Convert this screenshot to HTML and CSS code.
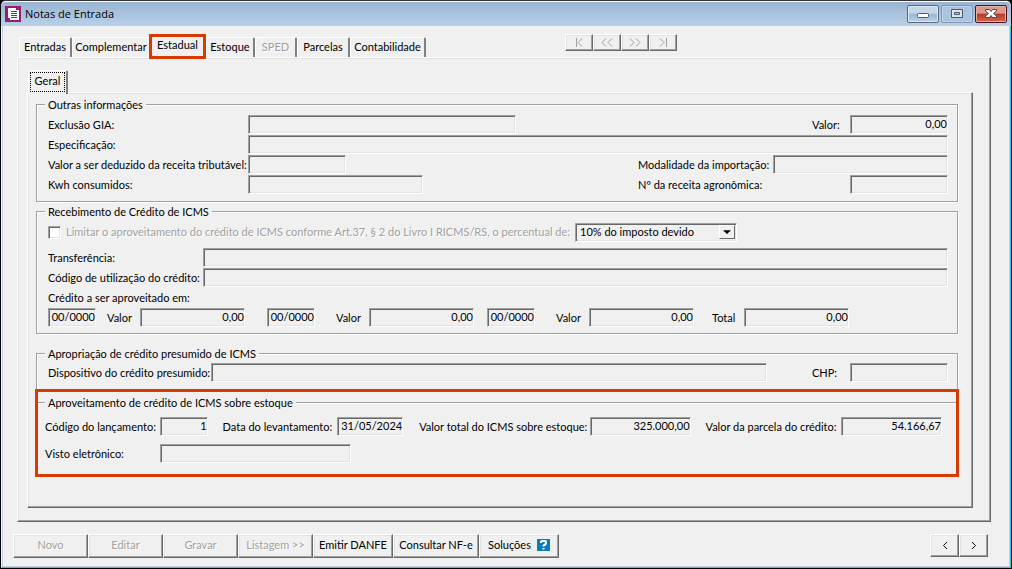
FILE: index.html
```html
<!DOCTYPE html>
<html lang="pt-BR">
<head>
    <meta charset="UTF-8">
    <meta name="viewport" content="width=device-width, initial-scale=1.0">
    <title>Notas de Entrada</title>
    <link rel="stylesheet" href="styles.css">
</head>
<body>
    <div class="window">
        <header class="titlebar">
            <svg class="app-icon" width="16" height="16" viewBox="0 0 16 16">
                <rect width="16" height="16" fill="#9b1c6e"/>
                <path d="M3 2h8v2h3v10H5v-2H3z" fill="#fff"/>
                <path d="M6 5.500h6M6 7.500h6M6 9.500h6M6 11.500h6" stroke="#9b1c6e"/>
            </svg>
            <h1 class="title">Notas de Entrada</h1>
            <div class="window-buttons">
                <button class="win-btn" aria-label="Minimizar">
                    <svg width="12" height="12" viewBox="0 0 12 12"><rect x=".5" y="5.500" width="11" height="4" rx="1" fill="#fff" stroke="#50566b"/></svg>
                </button>
                <button class="win-btn win-max" aria-label="Maximizar">
                    <svg width="12" height="12" viewBox="0 0 12 12"><path d="M.5 1.500h11v8H.5zM3.500 4.500v2h5v-2z" fill="#dde3ea" fill-rule="evenodd" stroke="#50566b"/></svg>
                </button>
                <button class="win-btn win-close" aria-label="Fechar">
                    <svg width="12" height="12" viewBox="0 0 12 12"><path d="M.5 1.500h4L6 3.500l1.500-2h4V3L8.500 5.500l3 2.500v1.500h-4L6 7.500l-1.500 2h-4V8l3-2.500L.5 3z" fill="#fff" stroke="#50435a"/></svg>
                </button>
            </div>
        </header>

        <main class="content">
            <div class="top-row">
                <div class="tabs" role="tablist">
                    <button class="tab tab-entradas" role="tab">Entradas</button>
                    <button class="tab tab-complementar" role="tab">Complementar</button>
                    <button class="tab active" role="tab" aria-selected="true">Estadual</button>
                    <button class="tab tab-estoque" role="tab">Estoque</button>
                    <button class="tab tab-sped" role="tab" disabled>SPED</button>
                    <button class="tab tab-parcelas" role="tab">Parcelas</button>
                    <button class="tab tab-contabilidade" role="tab">Contabilidade</button>
                </div>
                <div class="record-nav">
                    <button class="btn nav-btn" disabled aria-label="Primeiro">
                        <svg class="arrow" width="20" height="9" viewBox="0 0 20 9"><path d="M7.5 0v9M13 .5l-4 4 4 4"/></svg>
                    </button>
                    <button class="btn nav-btn" disabled aria-label="Anterior">
                        <svg class="arrow" width="20" height="9" viewBox="0 0 20 9"><path d="M9 .5l-4 4 4 4M15 .5l-4 4 4 4"/></svg>
                    </button>
                    <button class="btn nav-btn" disabled aria-label="Próximo">
                        <svg class="arrow" width="20" height="9" viewBox="0 0 20 9"><path d="M5 .5l4 4-4 4M11 .5l4 4-4 4"/></svg>
                    </button>
                    <button class="btn nav-btn" disabled aria-label="Último">
                        <svg class="arrow" width="20" height="9" viewBox="0 0 20 9"><path d="M7 .5l4 4-4 4M13.500 0v9"/></svg>
                    </button>
                </div>
            </div>

            <div class="panel outer-panel">
                <div class="sub-tabs" role="tablist">
                    <button class="sub-tab" role="tab" aria-selected="true"><span class="focus">Geral</span></button>
                </div>
                <div class="panel inner-panel">

                    <fieldset class="group">
                        <legend>Outras informações</legend>
                        <div class="row">
                            <label class="label-col" for="gia">Exclusão GIA:</label>
                            <input class="field w-gia" id="gia" readonly>
                            <label class="push label-valor" for="valor">Valor:</label>
                            <input class="field w-small" id="valor" value="0,00" readonly>
                        </div>
                        <div class="row">
                            <label class="label-col" for="espec">Especificação:</label>
                            <input class="field grow" id="espec" readonly>
                        </div>
                        <div class="row">
                            <label class="label-col" for="deduzido">Valor a ser deduzido da receita tributável:</label>
                            <input class="field w-small" id="deduzido" readonly>
                            <label class="push label-modalidade" for="modalidade">Modalidade da importação:</label>
                            <input class="field w-medium" id="modalidade" readonly>
                        </div>
                        <div class="row">
                            <label class="label-col" for="kwh">Kwh consumidos:</label>
                            <input class="field w-medium" id="kwh" readonly>
                            <label class="push label-receita" for="receita">Nº da receita agronômica:</label>
                            <input class="field w-small" id="receita" readonly>
                        </div>
                    </fieldset>

                    <fieldset class="group group-credito">
                        <legend>Recebimento de Crédito de ICMS</legend>
                        <div class="row row-limite">
                            <input type="checkbox" class="check" id="limitar" disabled>
                            <label class="disabled-text" for="limitar">Limitar o aproveitamento do crédito de ICMS conforme Art.37, § 2 do Livro I RICMS/RS, o percentual de:</label>
                            <span class="combo">
                                <select aria-label="Percentual">
                                    <option>10% do imposto devido</option>
                                </select>
                                <svg class="combo-arrow" width="16" height="14" viewBox="0 0 16 14"><path d="M4 5h8v1h-1v1h-1v1H9v1H7V8H6V7H5V6H4z"/></svg>
                            </span>
                        </div>
                        <div class="row">
                            <label class="label-transf" for="transf">Transferência:</label>
                            <input class="field grow" id="transf" readonly>
                        </div>
                        <div class="row">
                            <label class="label-transf" for="codutil">Código de utilização do crédito:</label>
                            <input class="field grow" id="codutil" readonly>
                        </div>
                        <div class="row">
                            <span>Crédito a ser aproveitado em:</span>
                        </div>
                        <div class="credits">
                            <div class="credit">
                                <input class="field w-month" value="00/0000" aria-label="Mês 1" readonly>
                                <label for="v1">Valor</label>
                                <input class="field w-money" id="v1" value="0,00" readonly>
                            </div>
                            <div class="credit credit-wide">
                                <input class="field w-month" value="00/0000" aria-label="Mês 2" readonly>
                                <label for="v2">Valor</label>
                                <input class="field w-money" id="v2" value="0,00" readonly>
                            </div>
                            <div class="credit credit-wide">
                                <input class="field w-month" value="00/0000" aria-label="Mês 3" readonly>
                                <label for="v3">Valor</label>
                                <input class="field w-money" id="v3" value="0,00" readonly>
                            </div>
                            <div class="credit credit-total">
                                <label for="total">Total</label>
                                <input class="field w-money" id="total" value="0,00" readonly>
                            </div>
                        </div>
                    </fieldset>

                    <fieldset class="group group-presumido">
                        <legend>Apropriação de crédito presumido de ICMS</legend>
                        <div class="row">
                            <label class="label-disp" for="disp">Dispositivo do crédito presumido:</label>
                            <input class="field grow" id="disp" readonly>
                            <label class="label-chp" for="chp">CHP:</label>
                            <input class="field w-small" id="chp" readonly>
                        </div>
                    </fieldset>

                    <div class="highlight">
                        <fieldset class="group group-estoque">
                            <legend>Aproveitamento de crédito de ICMS sobre estoque</legend>
                            <div class="row stock-row">
                                <label class="label-stock" for="codlanc">Código do lançamento:</label>
                                <input class="field w-month" id="codlanc" value="1" readonly>
                                <label class="label-data" for="data">Data do levantamento:</label>
                                <input class="field w-date" id="data" value="31/05/2024" readonly>
                                <label class="label-total" for="icms">Valor total do ICMS sobre estoque:</label>
                                <input class="field w-stock" id="icms" value="325.000,00" readonly>
                                <label class="label-parcela" for="parcela">Valor da parcela do crédito:</label>
                                <input class="field w-stock" id="parcela" value="54.166,67" readonly>
                            </div>
                            <div class="row">
                                <label class="label-stock" for="visto">Visto eletrônico:</label>
                                <input class="field w-visto" id="visto" readonly>
                            </div>
                        </fieldset>
                    </div>
                </div>
            </div>

            <footer class="actions">
                <button class="btn action" disabled>Novo</button>
                <button class="btn action" disabled>Editar</button>
                <button class="btn action" disabled>Gravar</button>
                <button class="btn action" disabled>Listagem &gt;&gt;</button>
                <button class="btn action action-wide">Emitir DANFE</button>
                <button class="btn action action-wider">Consultar NF-e</button>
                <button class="btn action action-wide">Soluções
                    <svg class="help" width="13" height="12" viewBox="0 0 13 12"><rect width="13" height="12" fill="#0a7cba"/><path d="M4 4V3q0-1 1-1h3q1 0 1 1v1q0 1-1 1.500T6.500 7v.5M6.500 9v1.500" fill="none" stroke="#fff" stroke-width="2"/></svg>
                </button>
                <div class="pager">
                    <button class="btn page-btn" aria-label="Página anterior">
                        <svg class="arrow" width="6" height="9" viewBox="0 0 6 9"><path d="M5 1L1.500 4.500 5 8"/></svg>
                    </button>
                    <button class="btn page-btn" aria-label="Próxima página">
                        <svg class="arrow" width="6" height="9" viewBox="0 0 6 9"><path d="M1 1l3.500 3.500L1 8"/></svg>
                    </button>
                </div>
            </footer>
        </main>
    </div>
</body>
</html>
```

FILE: styles.css
```css
* {
    box-sizing: border-box;
}
body {
    margin: 0;
    background: #000;
    font-family: Lato, "Liberation Sans", Arial, sans-serif;
    font-size: 11px;
    line-height: 14px;
    color: #000;
}
button, input, select {
    margin: 0;
    font: inherit;
    color: inherit;
}
button {
    padding: 0;
    white-space: nowrap;
}
label, legend, span {
    white-space: nowrap;
}
svg {
    flex: none;
}

/* window frame */
.window {
    display: flex;
    flex-direction: column;
    min-height: 100vh;
    border: 1px solid #000;
    border-top-color: #333;
    border-radius: 6px 6px 0 0;
    background: #f0f0f0;
    box-shadow: inset -1px -1px 0 #35c5ea, inset 1px 0 0 #fff, inset 2px -2px 0 #b9d1ea, inset -2px 0 0 #b9d1ea;
}
.titlebar {
    display: flex;
    align-items: center;
    height: 25px;
    padding: 0 4px;
    border-top: 1px solid #fff;
    border-radius: 5px 5px 0 0;
    background: linear-gradient(#99b4d1, #b9d1ea);
}
.title {
    margin: 0 auto 0 4px;
    font: 11px/16px "Open Sans", "Noto Sans", sans-serif;
}
.window-buttons {
    display: flex;
    gap: 2px;
}
.win-btn {
    display: flex;
    align-items: center;
    justify-content: center;
    width: 32px;
    height: 18px;
    border: 1px solid #59677e;
    border-radius: 2px;
    background: linear-gradient(#c5d6e8 45%, #9db6d2 50%, #b9d1e8);
    box-shadow: inset 0 0 0 1px #dce8f4;
}
.win-max {
    border-color: #8397b1;
    background: #aac4df;
    box-shadow: inset 0 0 0 1px #bdd2e8;
}
.win-close {
    border-color: #4c1220;
    background: linear-gradient(#dd9a8c 45%, #b93922 50%, #cf6a4c);
    box-shadow: inset 0 0 0 1px #e6aea2;
}

/* tabs */
.content {
    flex: 1;
    display: flex;
    flex-direction: column;
    padding: 8px 20px 10px 16px;
}
.top-row {
    display: flex;
    align-items: flex-start;
    height: 23px;
}
.tabs {
    display: flex;
    align-items: flex-start;
    padding-left: 2px;
}
.tab {
    height: 20px;
    margin-top: 3px;
    padding-bottom: 2px;
    border: 0;
    border-top: 1px solid #fff;
    border-left: 1px solid #fff;
    border-right: 2px solid #808080;
    border-radius: 2px 2px 0 0;
    background: #f0f0f0;
}
.tab-entradas {
    width: 53px;
}
.tab-complementar {
    width: 77px;
    border-right: 0;
}
.tab-estoque {
    width: 49px;
}
.tab-sped {
    width: 42px;
}
.tab-parcelas {
    width: 53px;
}
.tab-contabilidade {
    width: 76px;
}
.tab.active {
    position: relative;
    width: 57px;
    height: 25px;
    margin-top: 0;
    padding-bottom: 3px;
    border: 3px solid #d83b01;
    border-radius: 0;
}
.tab:disabled, .btn:disabled, .disabled-text {
    color: #a0a0a0;
    text-shadow: 1px 1px 0 #fff;
}
.record-nav {
    display: flex;
    margin-left: 139px;
}
.btn {
    display: flex;
    align-items: center;
    justify-content: center;
    border: 1px solid;
    border-color: #fff #696969 #696969 #fff;
    background: #f0f0f0;
    box-shadow: inset -1px -1px 0 #a0a0a0, inset 1px 1px 0 #e3e3e3;
}
.nav-btn {
    width: 28px;
    height: 17px;
}
.arrow {
    fill: none;
    stroke: currentColor;
}

/* panels */
.panel {
    flex: 1;
    border: 1px solid;
    border-color: #fff #696969 #696969 #fff;
    box-shadow: inset -1px -1px 0 #a0a0a0, inset 1px 1px 0 #e3e3e3;
}
.outer-panel {
    display: flex;
    flex-direction: column;
    padding: 12px 17px 13px 9px;
}
.sub-tabs {
    display: flex;
    padding-left: 1px;
}
.sub-tab {
    position: relative;
    display: flex;
    align-items: flex-start;
    width: 40px;
    height: 24px;
    margin-bottom: -2px;
    padding: 1px 1px 0;
    border: 0;
    border-top: 1px solid #fff;
    border-left: 1px solid #fff;
    border-right: 2px solid #808080;
    border-radius: 2px 2px 0 0;
    background: #f0f0f0;
}
.focus {
    flex: 1;
    height: 20px;
    border: 1px dotted #000;
    line-height: 15px;
}
.inner-panel {
    padding: 4px 14px 8px 8px;
}

/* groups */
.group {
    min-width: 0;
    margin: 0 0 2px;
    padding: 4px 9px 6px 11px;
    border: 1px solid #a0a0a0;
    box-shadow: inset 1px 1px 0 #fff, 1px 1px 0 #fff;
}
legend {
    margin-left: -3px;
    padding: 2px 3px 0;
    background: #f0f0f0;
    line-height: 12px;
}
.row {
    display: flex;
    height: 20px;
    align-items: center;
}
.field {
    flex: none;
    width: 0;
    height: 19px;
    margin-bottom: 1px;
    padding: 0 0 2px;
    border: 1px solid;
    border-color: #a0a0a0 #fff #fff #a0a0a0;
    border-radius: 0;
    background: #f0f0f0;
    box-shadow: inset 1px 1px 0 #696969, inset -1px -1px 0 #e3e3e3;
    text-align: right;
    outline: 0;
}
.grow {
    flex: 1;
}
.push {
    margin-left: auto;
}
.w-gia {
    width: 268px;
}
.w-small {
    width: 98px;
}
.w-medium {
    width: 175px;
}
.w-month {
    width: 48px;
}
.w-date {
    width: 66px;
}
.w-money {
    width: 105px;
}
.w-stock {
    width: 101px;
}
.w-visto {
    width: 191px;
}
.label-col {
    width: 200px;
}
.label-valor {
    width: 38px;
}
.label-modalidade {
    width: 135px;
}
.label-receita {
    width: 212px;
}
.label-transf {
    width: 155px;
}
.label-disp {
    width: 163px;
}
.label-chp {
    width: 38px;
    margin-left: 45px;
}
.group-credito {
    margin-bottom: 12px;
    padding-top: 5px;
    padding-bottom: 5px;
}
.row-limite {
    margin-bottom: 5px;
}
.check {
    appearance: none;
    width: 13px;
    height: 13px;
    margin: 0 5px 2px 0;
    border: 1px solid;
    border-color: #a0a0a0 #fff #fff #a0a0a0;
    background: #fff;
    box-shadow: inset 1px 1px 0 #696969, inset -1px -1px 0 #e3e3e3;
}
.row-limite label {
    width: 495px;
    margin-bottom: 2px;
}
.combo {
    position: relative;
    margin-left: 14px;
    margin-bottom: 1px;
}
.combo select {
    display: block;
    appearance: none;
    width: 162px;
    height: 19px;
    padding: 0 20px 2px 4px;
    border: 1px solid;
    border-color: #a0a0a0 #fff #fff #a0a0a0;
    border-radius: 0;
    background: #f0f0f0;
    box-shadow: inset 1px 1px 0 #696969, inset -1px -1px 0 #e3e3e3;
}
.combo-arrow {
    position: absolute;
    top: 2px;
    right: 2px;
    border: 1px solid;
    border-color: #fff #696969 #696969 #fff;
    pointer-events: none;
}
.credits {
    display: grid;
    grid-template-columns: 219px 220px 225px 137px;
}
.credit {
    display: flex;
    align-items: center;
    width: 197px;
    height: 20px;
}
.credit-wide {
    width: 207px;
}
.credit-total {
    width: 137px;
}
.credit label {
    width: 33px;
    margin-left: auto;
}
.group-presumido {
    margin-bottom: 0;
    padding: 3px 9px 6px 11px;
    border-bottom: 0;
}
.highlight {
    margin: 0 -1px;
    padding: 3px 0 10px;
    border: 3px solid #d83b01;
}
.group-estoque {
    margin: 0;
    padding: 8px 14px 0 7px;
    border-width: 1px 0 0;
    box-shadow: inset 0 1px 0 #fff;
}
.group-estoque legend {
    margin-left: 0;
}
.stock-row {
    margin-bottom: 7px;
}
.label-stock {
    width: 115px;
}
.label-data {
    width: 115px;
    margin-left: 15px;
}
.label-total {
    width: 171px;
    margin-left: 16px;
}
.label-parcela {
    width: 136px;
    margin-left: 15px;
}

/* bottom buttons */
.actions {
    display: flex;
    margin: 12px -17px 0 -4px;
}
.action {
    width: 75px;
    height: 24px;
    padding-bottom: 2px;
}
.action-wide {
    width: 80px;
}
.action-wider {
    width: 86px;
}
.help {
    margin-left: 6px;
}
.pager {
    display: flex;
    margin: 0 20px 0 auto;
}
.page-btn {
    width: 29px;
    height: 23px;
}
```
